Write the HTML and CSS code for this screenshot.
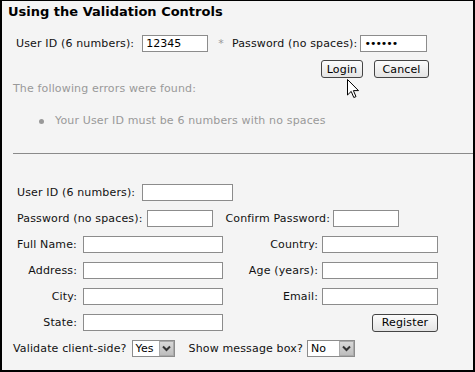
FILE: index.html
```html
<!DOCTYPE html>
<html lang="en">

<head>
    <meta charset="utf-8">
    <title>Using the Validation Controls</title>
    <link rel="stylesheet" href="styles.css">
</head>

<body>
    <div class="frame">
        <h1 class="title">Using the Validation Controls</h1>

        <div class="loginRow">
            <label>User ID (6 numbers):</label>
            <input type="text" class="box uid" value="12345">
            <span class="star">*</span>
            <label class="pwdLabel">Password (no spaces):</label>
            <input type="password" class="box pwd" value="123456">
        </div>

        <div class="btnRow">
            <button class="btn login">Login</button>
            <button class="btn cancel">Cancel</button>
        </div>

        <p class="errHead">The following errors were found:</p>
        <div class="errItem"><span class="dot"></span>Your User ID must be 6 numbers with no spaces</div>

        <hr class="line">

        <div class="row r1">
            <label>User ID (6 numbers):</label>
            <input type="text" class="box uid2">
        </div>
        <div class="row r2">
            <label>Password (no spaces):</label>
            <input type="password" class="box pwd2">
            <label class="confirm">Confirm Password:</label>
            <input type="password" class="box pwd3">
        </div>

        <div class="grid">
            <label class="l1 first">Full Name:</label>
            <input type="text" class="box">
            <label class="l2">Country:</label>
            <input type="text" class="box">

            <label class="l1">Address:</label>
            <input type="text" class="box">
            <label class="l2">Age (years):</label>
            <input type="text" class="box">

            <label class="l1">City:</label>
            <input type="text" class="box">
            <label class="l2">Email:</label>
            <input type="text" class="box">

            <label class="l1">State:</label>
            <input type="text" class="box">
            <span></span>
            <div class="regCell"><button class="btn register">Register</button></div>
        </div>

        <div class="row optRow">
            <label>Validate client-side?</label>
            <div class="select yes">
                <span>Yes</span>
                <span class="arrow"><svg width="9" height="7" viewBox="0 0 9 7"><path d="M1 1.5 L4.5 5 L8 1.5" fill="none" stroke="#333" stroke-width="2"/></svg></span>
            </div>
            <label class="msgLabel">Show message box?</label>
            <div class="select no">
                <span>No</span>
                <span class="arrow"><svg width="9" height="7" viewBox="0 0 9 7"><path d="M1 1.5 L4.5 5 L8 1.5" fill="none" stroke="#333" stroke-width="2"/></svg></span>
            </div>
        </div>

        <!-- mouse pointer over the login button -->
        <svg class="cursor" width="13" height="20" viewBox="0 0 13 20">
            <path d="M0.5 0.5 L0.5 16 L4.2 12.4 L6.8 18.5 L9 17.6 L6.4 11.6 L11.5 11.6 Z" fill="#fff" stroke="#000" stroke-width="1"/>
        </svg>
    </div>
</body>

</html>
```

FILE: styles.css
```css
body {
    margin: 0;
    background-color: #f4f4f4;
    font-family: 'DejaVu Sans', Verdana, sans-serif;
    font-size: 11px;
    letter-spacing: 0.15px;
    color: #111;
}

.frame {
    width: 475px;
    height: 372px;
    box-sizing: border-box;
    border: 2px solid #000;
    border-top-width: 1px;
    background-color: #f4f4f4;
    position: relative;
    overflow: hidden;
}

.title {
    margin: 0;
    padding: 2px 0 0 6px;
    font-size: 13px;
    line-height: 18px;
    letter-spacing: 0;
    font-weight: bold;
    color: #000;
}

label {
    white-space: nowrap;
}

.box {
    height: 17px;
    box-sizing: border-box;
    border: 1px solid #8c8c8c;
    background-color: #fff;
    padding: 0 3px;
    margin: 0;
    font-family: 'DejaVu Sans', Verdana, sans-serif;
    font-size: 11px;
    color: #000;
}

/* top login row */
.loginRow {
    display: flex;
    align-items: center;
    height: 17px;
    margin-top: 14px;
    padding-left: 14px;
}

.uid {
    width: 66px;
    margin-left: 8px;
}

.star {
    color: #999;
    margin-left: 10px;
}

.pwdLabel {
    margin-left: 8px;
}

.pwd {
    width: 67px;
    margin-left: 3px;
    letter-spacing: -1px;
}

.btnRow {
    display: flex;
    height: 18px;
    margin-top: 8px;
    padding-left: 319px;
}

.btn {
    height: 18px;
    box-sizing: border-box;
    border: 1px solid #444;
    border-radius: 3px;
    background: linear-gradient(#fcfcfc, #e4e4e4);
    font-family: 'DejaVu Sans', Verdana, sans-serif;
    font-size: 11px;
    letter-spacing: 0.15px;
    color: #000;
    padding: 0;
    margin: 0;
}

.login {
    width: 42px;
}

.cancel {
    width: 55px;
    margin-left: 11px;
}

.errHead {
    margin: 4px 0 0 0;
    padding-left: 11px;
    line-height: 14px;
    color: #999;
}

.errItem {
    display: flex;
    align-items: center;
    margin-top: 18px;
    padding-left: 37px;
    line-height: 14px;
    color: #999;
}

.dot {
    width: 5px;
    height: 5px;
    border-radius: 50%;
    background-color: #999;
    margin-right: 11px;
}

.line {
    margin: 25px 0 0 11px;
    border: none;
    border-top: 1px solid #8a8a8a;
    height: 0;
}

/* register form */
.row {
    display: flex;
    align-items: center;
    height: 17px;
    padding-left: 15px;
}

.r1 {
    margin-top: 30px;
}

.uid2 {
    width: 91px;
    margin-left: 7px;
}

.r2 {
    margin-top: 9px;
}

.pwd2 {
    width: 66px;
    margin-left: 4px;
}

.confirm {
    margin-left: 13px;
}

.pwd3 {
    width: 66px;
    margin-left: 3px;
}

.grid {
    display: grid;
    grid-template-columns: 66px 140px 99px 116px;
    grid-auto-rows: 17px;
    row-gap: 9px;
    margin-top: 9px;
    padding-left: 15px;
    align-items: center;
}

.grid .box {
    width: 100%;
}

.l1 {
    text-align: right;
    padding-right: 6px;
}

.l1.first {
    text-align: left;
}

.l2 {
    text-align: right;
    padding-right: 4px;
}

.regCell {
    display: flex;
    justify-content: flex-end;
    height: 17px;
    align-items: center;
}

.register {
    width: 66px;
}

.optRow {
    margin-top: 9px;
    padding-left: 11px;
}

.select {
    display: flex;
    align-items: center;
    justify-content: space-between;
    height: 17px;
    box-sizing: border-box;
    border: 1px solid #8c8c8c;
    background-color: #fff;
    padding-left: 3px;
    color: #000;
}

.yes {
    width: 43px;
    margin-left: 5px;
}

.no {
    width: 48px;
    margin-left: 4px;
}

.msgLabel {
    margin-left: 14px;
}

.arrow {
    width: 15px;
    height: 15px;
    box-sizing: border-box;
    border: 1px solid #aaa;
    background: linear-gradient(#d8d8d8, #bdbdbd);
    display: flex;
    align-items: center;
    justify-content: center;
}

.cursor {
    position: absolute;
    left: 345px;
    top: 78px;
}
```
